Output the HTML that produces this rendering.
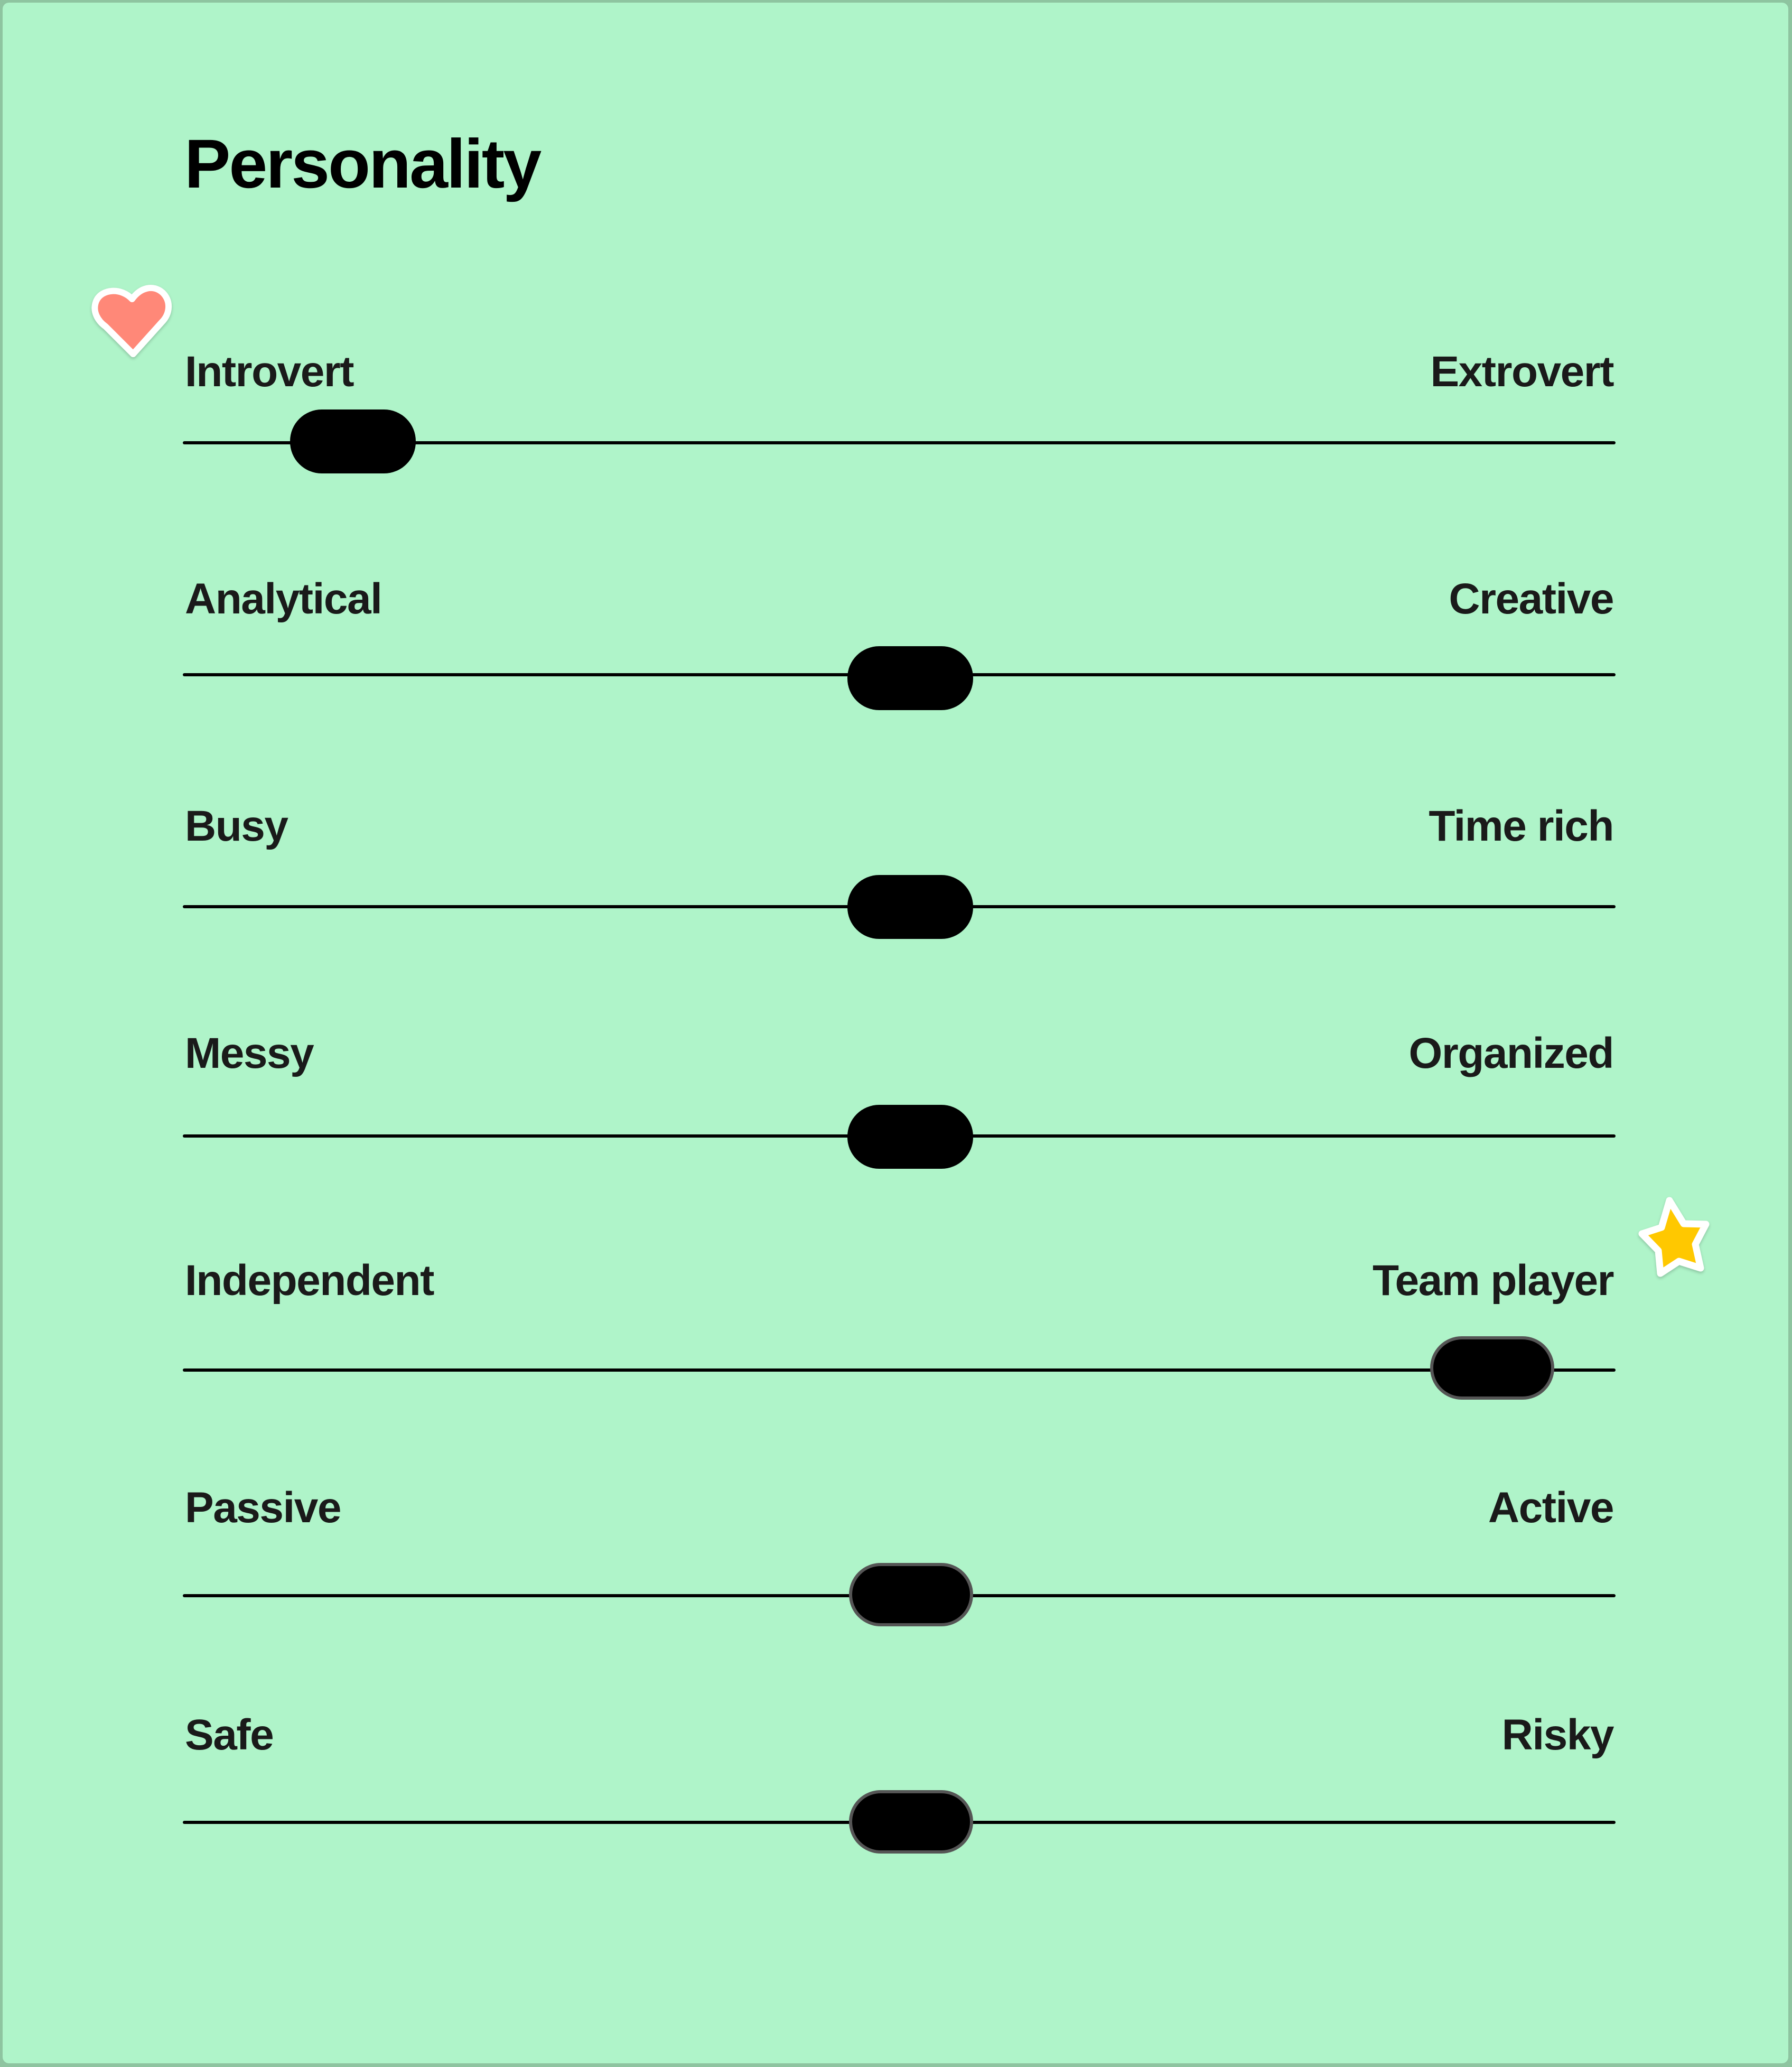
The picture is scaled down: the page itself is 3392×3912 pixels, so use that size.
<!DOCTYPE html>
<html><head><meta charset="utf-8"><style>
html,body{margin:0;padding:0;}
body{width:3392px;height:3912px;position:relative;overflow:hidden;background:#8ec4a0;font-family:"Liberation Sans",sans-serif;}
.card{position:absolute;left:5px;top:5px;width:3380px;height:3900px;background:#aff4c9;border-radius:12px;}
.t{position:absolute;left:349px;top:244px;font-size:131px;font-weight:700;color:#000;letter-spacing:-3px;line-height:1;margin:0;}
.lab{position:absolute;font-size:82px;font-weight:700;color:#1a1a1a;line-height:1;letter-spacing:-1.5px;}
.l{left:350px;}
.r{right:338px;text-align:right;}
.line{position:absolute;left:346px;width:2712px;height:6px;background:#000;border-radius:3px;}
.th{position:absolute;width:238px;height:121px;border-radius:60px;background:#000;box-sizing:border-box;}
.th.b{border:6px solid #555;}
</style></head><body>
<div class="card"></div>
<h1 class="t">Personality</h1>

<div class="lab l" style="top:663px">Introvert</div><div class="lab r" style="top:663px">Extrovert</div>
<div class="line" style="top:835px"></div>
<div class="th" style="left:549px;top:775px"></div>

<div class="lab l" style="top:1093px">Analytical</div><div class="lab r" style="top:1093px">Creative</div>
<div class="line" style="top:1274px"></div>
<div class="th" style="left:1604px;top:1223px"></div>

<div class="lab l" style="top:1523px">Busy</div><div class="lab r" style="top:1523px">Time rich</div>
<div class="line" style="top:1713px"></div>
<div class="th" style="left:1604px;top:1656px"></div>

<div class="lab l" style="top:1953px">Messy</div><div class="lab r" style="top:1953px">Organized</div>
<div class="line" style="top:2147px"></div>
<div class="th" style="left:1604px;top:2091px"></div>

<div class="lab l" style="top:2383px">Independent</div><div class="lab r" style="top:2383px">Team player</div>
<div class="line" style="top:2590px"></div>
<div class="th b" style="left:2707px;top:2529px;width:235px;height:120px"></div>

<div class="lab l" style="top:2813px">Passive</div><div class="lab r" style="top:2813px">Active</div>
<div class="line" style="top:3017px"></div>
<div class="th b" style="left:1607px;top:2958px;width:235px;height:120px"></div>

<div class="lab l" style="top:3243px">Safe</div><div class="lab r" style="top:3243px">Risky</div>
<div class="line" style="top:3446px"></div>
<div class="th b" style="left:1607px;top:3388px;width:235px;height:120px"></div>

<svg style="position:absolute;left:168px;top:530px" width="175" height="160" viewBox="0 0 175 160">
<defs><filter id="sh" x="-20%" y="-20%" width="140%" height="140%"><feDropShadow dx="0" dy="3" stdDeviation="3" flood-color="#000" flood-opacity="0.2"/></filter></defs>
<path filter="url(#sh)" d="M82 36 C62 14 24 16 14 40 C6 60 18 78 32 88 L84 140 L138 80 C154 64 156 40 140 24 C122 8 98 14 82 36 Z" fill="#ff8878" stroke="#fff" stroke-width="12" stroke-linejoin="round"/>
</svg>

<svg style="position:absolute;left:3080px;top:2250px" width="180" height="190" viewBox="0 0 180 190">
<defs><filter id="sh2" x="-20%" y="-20%" width="140%" height="140%"><feDropShadow dx="0" dy="3" stdDeviation="3" flood-color="#000" flood-opacity="0.2"/></filter></defs>
<path filter="url(#sh2)" d="M80 22 L107 66 L149 67 L129 105 L139 150 L98 137 L63 160 L59 117 L28 85 L65 73 Z" fill="#ffc800" stroke="#fff" stroke-width="13" stroke-linejoin="round"/>
</svg>
</body></html>
